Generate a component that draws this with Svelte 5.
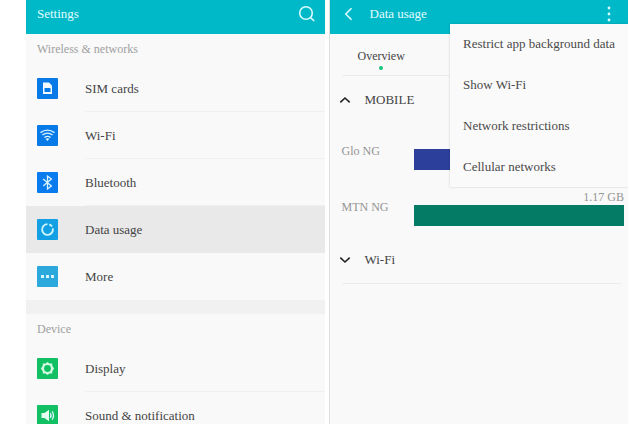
<script lang="ts">
	const wireless = [
		{ icon: 'sim', label: 'SIM cards', color: '#087ae8' },
		{ icon: 'wifi', label: 'Wi-Fi', color: '#087ae8' },
		{ icon: 'bluetooth', label: 'Bluetooth', color: '#087bee' },
		{ icon: 'data', label: 'Data usage', color: '#139fe3' },
		{ icon: 'more', label: 'More', color: '#2ba9dc' }
	];
	const device = [
		{ icon: 'display', label: 'Display', color: '#12c064' },
		{ icon: 'sound', label: 'Sound & notification', color: '#12c064' }
	];
	const sections = [
		{ title: 'Wireless & networks', items: wireless },
		{ title: 'Device', items: device }
	];

	const usage = [
		{ name: 'Glo NG', amount: '', percent: 45, color: '#2b3f9b' },
		{ name: 'MTN NG', amount: '1.17 GB', percent: 100, color: '#047c65' }
	];

	const menu = [
		'Restrict app background data',
		'Show Wi-Fi',
		'Network restrictions',
		'Cellular networks'
	];

	let selected = $state('Data usage');
	let menuOpen = $state(true);
	let mobileOpen = $state(true);
</script>

<div class="screens">
	<section class="screen">
		<header class="bar">
			<h1>Settings</h1>
			<button class="icon-button search" aria-label="Search">
				<svg width="18" height="18" viewBox="0 0 18 18">
					<circle cx="8" cy="8" r="6.3" />
					<path d="M12.6 12.6 16.2 16" />
				</svg>
			</button>
		</header>

		{#each sections as section}
			<div class="group">
				<h2>{section.title}</h2>
				{#each section.items as item}
					<button
						class="row"
						class:selected={selected === item.label}
						onclick={() => (selected = item.label)}
					>
						<svg class="tile" width="21" height="21" viewBox="0 0 21 21">
							<rect width="21" height="21" rx="1" fill={item.color} />
							{#if item.icon === 'sim'}
								<path d="M6 4.5h6l3 3V16H6z" fill="#f2faff" />
								<rect x="7.5" y="10" width="6" height="4" fill={item.color} />
							{:else if item.icon === 'wifi'}
								<g class="line">
									<path d="M3.5 7.6Q10.5 2.6 17.5 7.6" />
									<path d="M5.4 10.1Q10.5 6.2 15.6 10.1" />
									<path d="M7.4 12.6Q10.5 10 13.6 12.6" />
								</g>
								<path d="m8.6 13.8 1.9 2.2 1.9-2.2q-1.9-1.3-3.8 0z" fill="#d9f4ff" />
							{:else if item.icon === 'bluetooth'}
								<path class="line" d="m6.2 7 8.2 7-3.9 3V4l3.9 3-8.2 7" />
							{:else if item.icon === 'data'}
								<path class="ring" d="M15.8 9.4A5.4 5.4 0 1 1 10.5 5.1" />
								<path class="ring" d="M12.3 5.4A5.4 5.4 0 0 1 15 7.6" />
							{:else if item.icon === 'more'}
								<path d="M4 9h3v3H4zM9 9h3v3H9zM14 9h3v3h-3z" fill="#d9f6ff" />
							{:else if item.icon === 'display'}
								<path
									d="m10.5 4 1.9 1.6 2.7-.2.3 2.6 1.7 2.5-1.7 2.5-.3 2.6-2.7-.2-1.9 1.6-1.9-1.6-2.7.2-.3-2.6-1.7-2.5L5.6 8l.3-2.6 2.7.2z"
									fill="#d3fae2"
								/>
								<circle cx="10.5" cy="10.5" r="3.4" fill={item.color} />
							{:else if item.icon === 'sound'}
								<path d="M4.5 8h3L12 4.8v11.4L7.5 13h-3z" fill="#e4fff0" />
								<path class="line" d="M13.4 8q1.4 2.5 0 5M15.2 6.3q2.6 4.2 0 8.4" />
							{/if}
						</svg>
						<span class="label">{item.label}</span>
					</button>
				{/each}
			</div>
		{/each}
	</section>

	<section class="screen detail">
		<header class="bar">
			<button class="icon-button back" aria-label="Back">
				<svg width="9" height="14" viewBox="0 0 9 14"><path d="M7.5 1.2 1.8 7l5.7 5.8" /></svg>
			</button>
			<h1>Data usage</h1>
			<button
				class="icon-button dots"
				aria-label="More options"
				aria-expanded={menuOpen}
				onclick={() => (menuOpen = !menuOpen)}
			>
				<svg width="4" height="16" viewBox="0 0 4 16">
					<circle cx="2" cy="2" r="1.4" />
					<circle cx="2" cy="8" r="1.4" />
					<circle cx="2" cy="14" r="1.4" />
				</svg>
			</button>
			{#if menuOpen}
				<div class="menu">
					{#each menu as entry}
						<button>{entry}</button>
					{/each}
				</div>
			{/if}
		</header>

		<nav class="tabs">
			<a href="#overview">Overview</a>
		</nav>

		<button class="fold" aria-expanded={mobileOpen} onclick={() => (mobileOpen = !mobileOpen)}>
			<svg width="12" height="8" viewBox="0 0 12 8"><path d="M1.3 6.3 6 2l4.7 4.3" /></svg>
			MOBILE
		</button>
		{#if mobileOpen}
			<div class="usage">
				{#each usage as sim}
					<div class="sim">
						<span class="name">{sim.name}</span>
						<div class="meter">
							<span class="amount">{sim.amount}</span>
							<div class="fill" style="width: {sim.percent}%; background: {sim.color}"></div>
						</div>
					</div>
				{/each}
			</div>
		{/if}
		<button class="fold" aria-expanded="false">
			<svg width="12" height="8" viewBox="0 0 12 8"><path d="M1.3 1.7 6 6l4.7-4.3" /></svg>
			Wi-Fi
		</button>
		<hr />
	</section>
</div>

<style>
	:global(body) {
		background: #fff;
	}

	.screens {
		display: flex;
		gap: 4px;
		box-sizing: border-box;
		height: 100vh;
		padding: 0 1px 1px 26px;
		overflow: hidden;
		font-family: 'Liberation Serif', 'Times New Roman', serif;
		font-size: 13px;
		line-height: 16px;
		color: #444;
	}
	.screen {
		flex: 1;
		min-width: 0;
		overflow: hidden;
		background: #f9f9f9;
	}

	button {
		padding: 0;
		border: 0;
		background: none;
		font: inherit;
		color: inherit;
		text-align: left;
		cursor: pointer;
	}
	svg {
		display: block;
		flex: none;
	}

	.bar {
		position: relative;
		display: flex;
		align-items: center;
		box-sizing: border-box;
		height: 34px;
		padding: 0 9px 6px 11px;
		background: #00b9c8;
		color: #e3fcff;
	}
	h1 {
		flex: 1;
		margin: 0;
		font-size: 13px;
		font-weight: normal;
	}
	.icon-button svg {
		fill: none;
		stroke: #d8fbff;
		stroke-width: 1.6;
	}

	h2 {
		box-sizing: border-box;
		height: 31px;
		margin: 0;
		padding: 7px 11px;
		font-size: 12px;
		font-weight: normal;
		color: #a0a0a0;
	}
	.group + .group {
		border-top: 14px solid #f1f1f1;
	}
	.row {
		display: flex;
		align-items: center;
		gap: 27px;
		width: 100%;
		height: 47px;
		padding-left: 11px;
	}
	.row.selected {
		background: #e9e9e9;
	}
	.label {
		flex: 1;
		box-sizing: border-box;
		height: 47px;
		border-bottom: 1px solid #f0f0f0;
		line-height: 47px;
	}
	.selected .label,
	.row:last-child .label {
		border-color: transparent;
	}
	.line {
		fill: none;
		stroke: #d9f4ff;
		stroke-width: 1.3;
	}
	.ring {
		fill: none;
		stroke: #cdf5ff;
		stroke-width: 1.9;
	}

	.detail {
		box-sizing: border-box;
		border-left: 1px solid #ddd;
	}
	.detail .bar {
		gap: 17px;
		padding: 0 17px 6px 14px;
	}
	.dots svg {
		fill: #d8fbff;
		stroke: none;
	}

	.menu {
		position: absolute;
		z-index: 1;
		top: 24px;
		right: 0;
		display: flex;
		flex-direction: column;
		gap: 1px;
		background: #fafafa;
		box-shadow: 0 0 2px rgba(0, 0, 0, 0.2);
		color: #4a4a4a;
	}
	.menu button {
		height: 40px;
		padding: 0 13px;
		white-space: nowrap;
	}

	.tabs {
		display: flex;
		box-sizing: border-box;
		height: 42px;
		margin-left: 12px;
		padding: 14px 16px 0;
		border-bottom: 1px solid #e9eee9;
	}
	.tabs a {
		display: flex;
		flex-direction: column;
		align-items: center;
		gap: 2px;
		color: inherit;
		font-size: 12px;
		text-decoration: none;
	}
	.tabs a::after {
		content: '';
		width: 4px;
		height: 4px;
		border-radius: 50%;
		background: #19c37d;
	}

	.fold {
		display: flex;
		align-items: center;
		gap: 14px;
		width: 100%;
		height: 47px;
		padding-left: 9px;
	}
	.fold svg {
		fill: none;
		stroke: #222;
		stroke-width: 1.6;
	}
	.usage {
		display: grid;
		gap: 19px;
		padding: 10px 4px 10px 12px;
		font-size: 12px;
		color: #949494;
	}
	.sim {
		display: grid;
		grid-template-columns: 72px 1fr;
	}
	.name {
		padding-top: 10px;
	}
	.amount {
		display: block;
		height: 16px;
		text-align: right;
	}
	.fill {
		height: 21px;
	}
	hr {
		height: 1px;
		margin: 0 7px 0 12px;
		border: 0;
		background: #ececec;
	}
</style>
